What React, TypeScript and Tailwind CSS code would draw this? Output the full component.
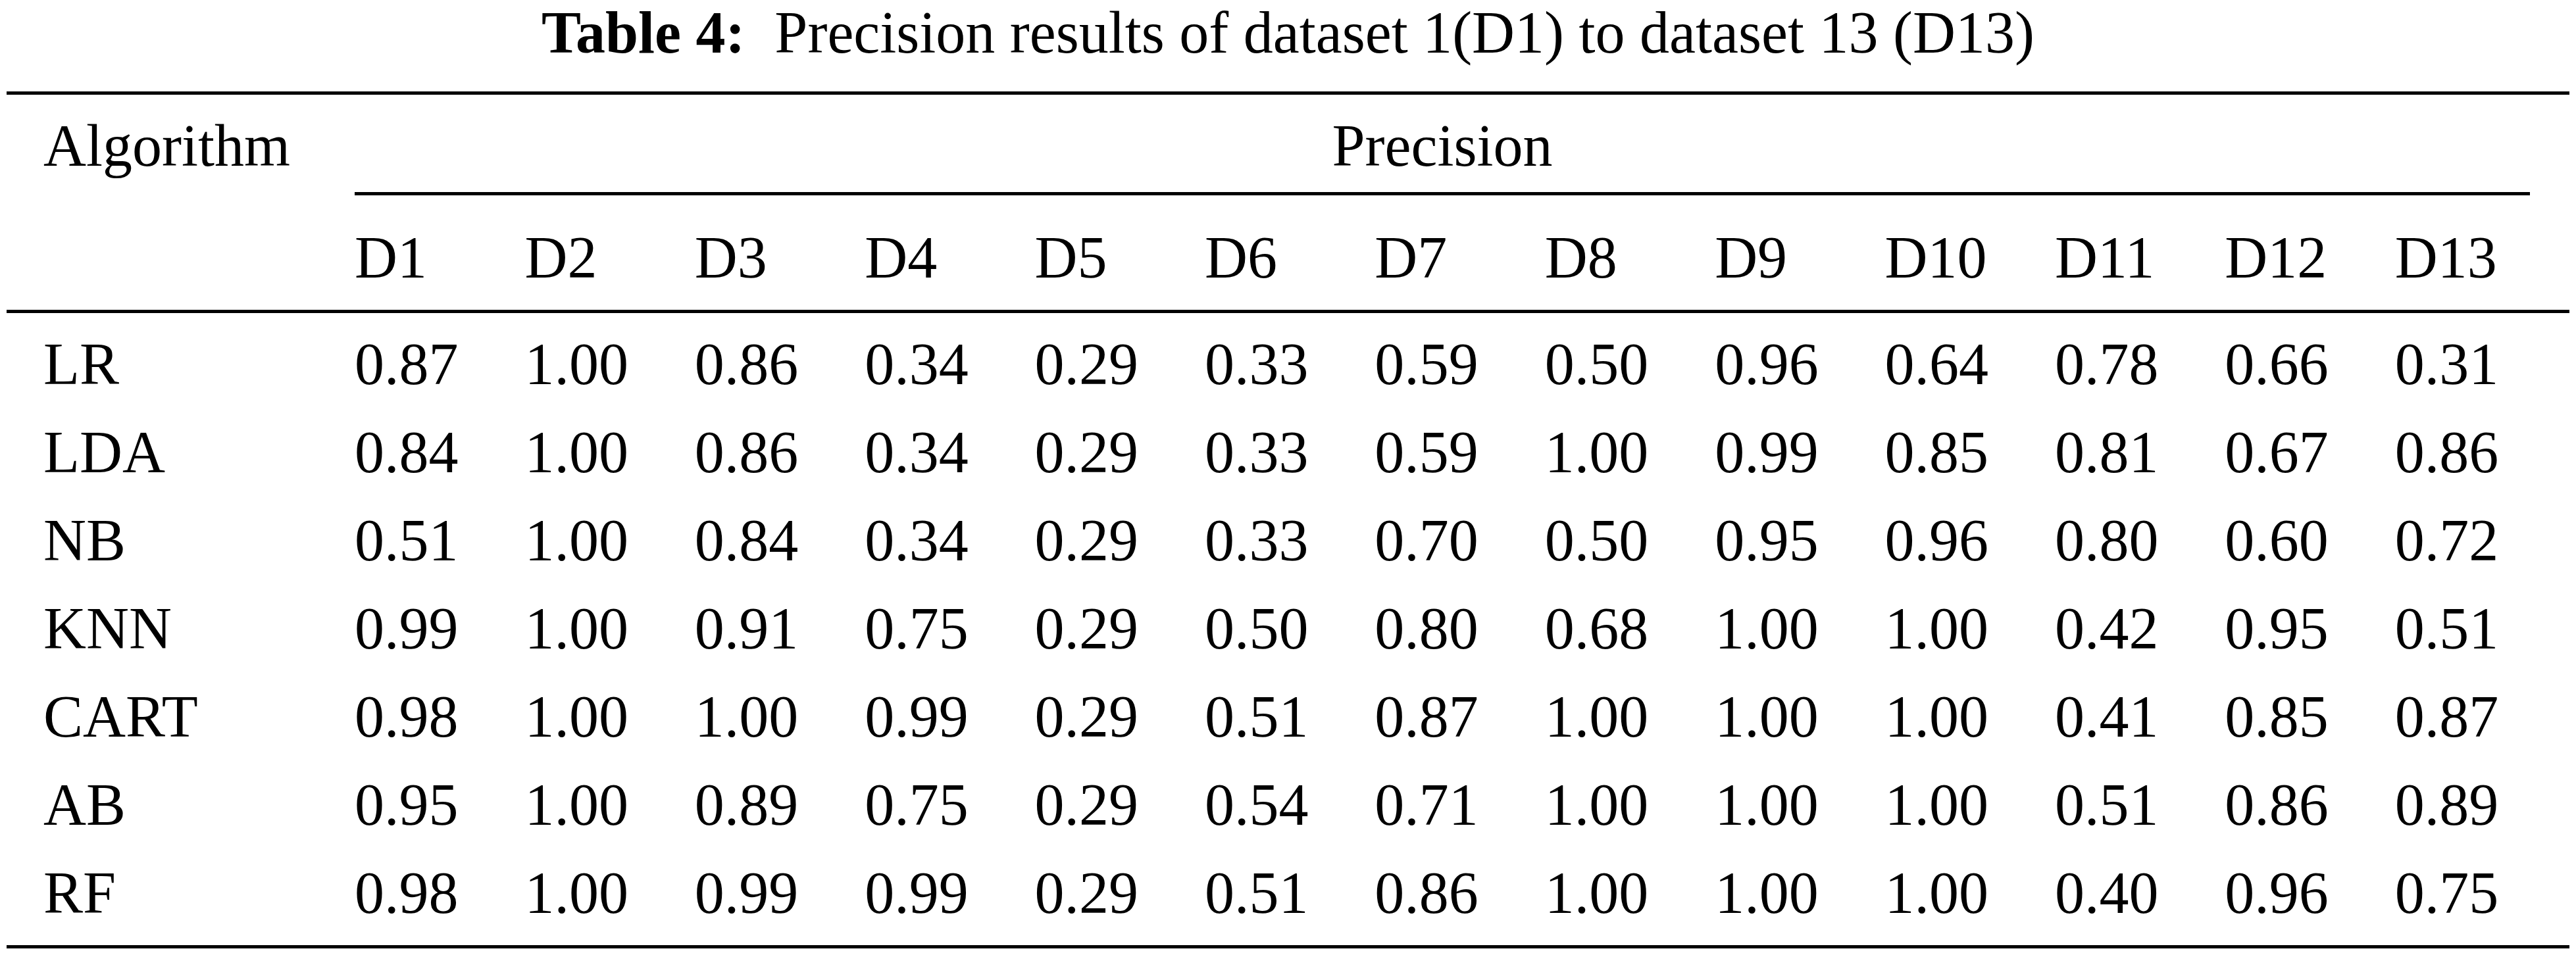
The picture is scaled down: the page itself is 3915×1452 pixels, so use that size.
const datasets = ['D1', 'D2', 'D3', 'D4', 'D5', 'D6', 'D7', 'D8', 'D9', 'D10', 'D11', 'D12', 'D13'];

const results: { name: string; values: string[] }[] = [
  { name: 'LR', values: ['0.87', '1.00', '0.86', '0.34', '0.29', '0.33', '0.59', '0.50', '0.96', '0.64', '0.78', '0.66', '0.31'] },
  { name: 'LDA', values: ['0.84', '1.00', '0.86', '0.34', '0.29', '0.33', '0.59', '1.00', '0.99', '0.85', '0.81', '0.67', '0.86'] },
  { name: 'NB', values: ['0.51', '1.00', '0.84', '0.34', '0.29', '0.33', '0.70', '0.50', '0.95', '0.96', '0.80', '0.60', '0.72'] },
  { name: 'KNN', values: ['0.99', '1.00', '0.91', '0.75', '0.29', '0.50', '0.80', '0.68', '1.00', '1.00', '0.42', '0.95', '0.51'] },
  { name: 'CART', values: ['0.98', '1.00', '1.00', '0.99', '0.29', '0.51', '0.87', '1.00', '1.00', '1.00', '0.41', '0.85', '0.87'] },
  { name: 'AB', values: ['0.95', '1.00', '0.89', '0.75', '0.29', '0.54', '0.71', '1.00', '1.00', '1.00', '0.51', '0.86', '0.89'] },
  { name: 'RF', values: ['0.98', '1.00', '0.99', '0.99', '0.29', '0.51', '0.86', '1.00', '1.00', '1.00', '0.40', '0.96', '0.75'] },
];

export default function App() {
  return (
    <div className="min-h-screen bg-white text-black font-['Liberation_Serif','Times_New_Roman',serif] text-[90px]">
      <div className="ml-[10px] w-[3895px]">
        <p className="h-[139px] text-center leading-[100px] whitespace-pre">
          <span className="font-bold">Table 4:</span>
          {'  '}Precision results of dataset 1(D1) to dataset 13 (D13)
        </p>

        {/* header */}
        <div className="grid grid-cols-[529px_repeat(13,258.4px)] border-y-[5px] border-black">
          <div className="row-span-2 pl-[56px] pt-[11px] leading-[134px]">Algorithm</div>
          <div className="col-span-13 mr-[53px] h-[153px] border-b-[5px] border-black pt-[11px] text-center leading-[134px]">
            Precision
          </div>
          {datasets.map((d) => (
            <div key={d} className="h-[174px] pt-[28px] leading-[134px]">
              {d}
            </div>
          ))}
        </div>

        {/* body */}
        <div className="border-b-[5px] border-black pt-[11px] pb-[12px]">
          {results.map((row) => (
            <div key={row.name} className="grid grid-cols-[529px_repeat(13,258.4px)] h-[134px] leading-[134px]">
              <div className="pl-[56px]">{row.name}</div>
              {row.values.map((v, i) => (
                <div key={i}>{v}</div>
              ))}
            </div>
          ))}
        </div>
      </div>
    </div>
  );
}
